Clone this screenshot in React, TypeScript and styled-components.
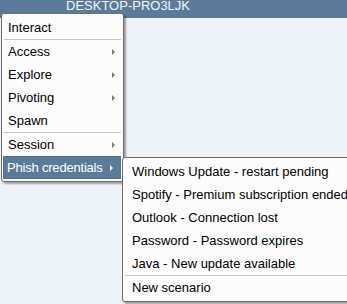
import React from "react";
import styled, { createGlobalStyle } from "styled-components";

const Global = createGlobalStyle`
  html, body { margin: 0; padding: 0; }
  body {
    width: 347px; height: 304px; overflow: hidden;
    font-family: Tahoma, "DejaVu Sans", "Liberation Sans", sans-serif;
    background: #eef2f9;
  }
`;

const Page = styled.div`
  position: relative;
  width: 347px;
  height: 304px;
  display: flex;
  flex-direction: column;
  background: #eef2f9;
  overflow: hidden;
`;

const TitleBar = styled.div`
  height: 18px;
  background: #5c7a9a;
  overflow: hidden;
  padding-left: 66px;
  flex: none;
`;

const Title = styled.div`
  color: #f2f5f9;
  font-size: 13px;
  line-height: 13px;
  margin-top: -1px;
  font-family: "Liberation Sans", Arial, sans-serif;
`;

const Menu = styled.div<{ $left: number; $top: number; $width: number }>`
  position: absolute;
  left: ${(p) => p.$left}px;
  top: ${(p) => p.$top}px;
  width: ${(p) => p.$width}px;
  box-sizing: border-box;
  background: #fcfcfc;
  border: 1px solid #6e6e6e;
  border-radius: 3px;
  box-shadow: 2px 2px 2px rgba(0, 0, 0, 0.35);
  padding: 2px 0;
  display: flex;
  flex-direction: column;
  font-family: "Liberation Sans", Arial, sans-serif;
  font-size: 13px;
`;

const Item = styled.div<{ $active?: boolean; $pad: number }>`
  height: 23px;
  box-sizing: border-box;
  display: flex;
  align-items: center;
  justify-content: space-between;
  padding: 0 7px 0 ${(p) => p.$pad}px;
  margin: 0 ${(p) => (p.$active ? "2px" : "0")} 0 ${(p) => (p.$active ? "1px" : "0")};
  color: ${(p) => (p.$active ? "#ffffff" : "#000000")};
  background: ${(p) => (p.$active ? "#5c7a9a" : "transparent")};
  border: 1px solid ${(p) => (p.$active ? "#52708f" : "transparent")};
  white-space: nowrap;
`;

const Label = styled.span<{ $tight?: boolean }>`
  letter-spacing: ${(p) => (p.$tight ? "-0.2px" : "0")};
`;

const Separator = styled.div`
  height: 1px;
  margin: 0 2px;
  background: #c6c6c6;
`;

const Arrow = styled.span<{ $active?: boolean }>`
  width: 0;
  height: 0;
  margin-left: 4px;
  border-top: 3px solid transparent;
  border-bottom: 3px solid transparent;
  border-left: 3px solid ${(p) => (p.$active ? "#ffffff" : "#7a7a7a")};
`;

type Entry = "sep" | { label: string; sub?: boolean; active?: boolean };

const mainItems: Entry[] = [
  { label: "Interact" },
  "sep",
  { label: "Access", sub: true },
  { label: "Explore", sub: true },
  { label: "Pivoting", sub: true },
  { label: "Spawn" },
  "sep",
  { label: "Session", sub: true },
  { label: "Phish credentials", sub: true, active: true },
];

const subItems = [
  "Windows Update - restart pending",
  "Spotify - Premium subscription ended",
  "Outlook - Connection lost",
  "Password - Password expires",
  "Java - New update available",
  "sep",
  "New scenario",
];

export default function App() {
  return (
    <Page>
      <Global />
      <TitleBar>
        <Title>DESKTOP-PRO3LJK</Title>
      </TitleBar>
      <Menu $left={1} $top={13} $width={123}>
        {mainItems.map((it, i) =>
          it === "sep" ? (
            <Separator key={i} />
          ) : (
            <Item key={i} $active={it.active} $pad={it.active ? 3 : 5}>
              <Label $tight={it.active}>{it.label}</Label>
              {it.sub && <Arrow $active={it.active} />}
            </Item>
          )
        )}
      </Menu>
      <Menu $left={122} $top={157} $width={240}>
        {subItems.map((s, i) =>
          s === "sep" ? (
            <Separator key={i} />
          ) : (
            <Item key={i} $pad={8}>
              <Label>{s}</Label>
            </Item>
          )
        )}
      </Menu>
    </Page>
  );
}
